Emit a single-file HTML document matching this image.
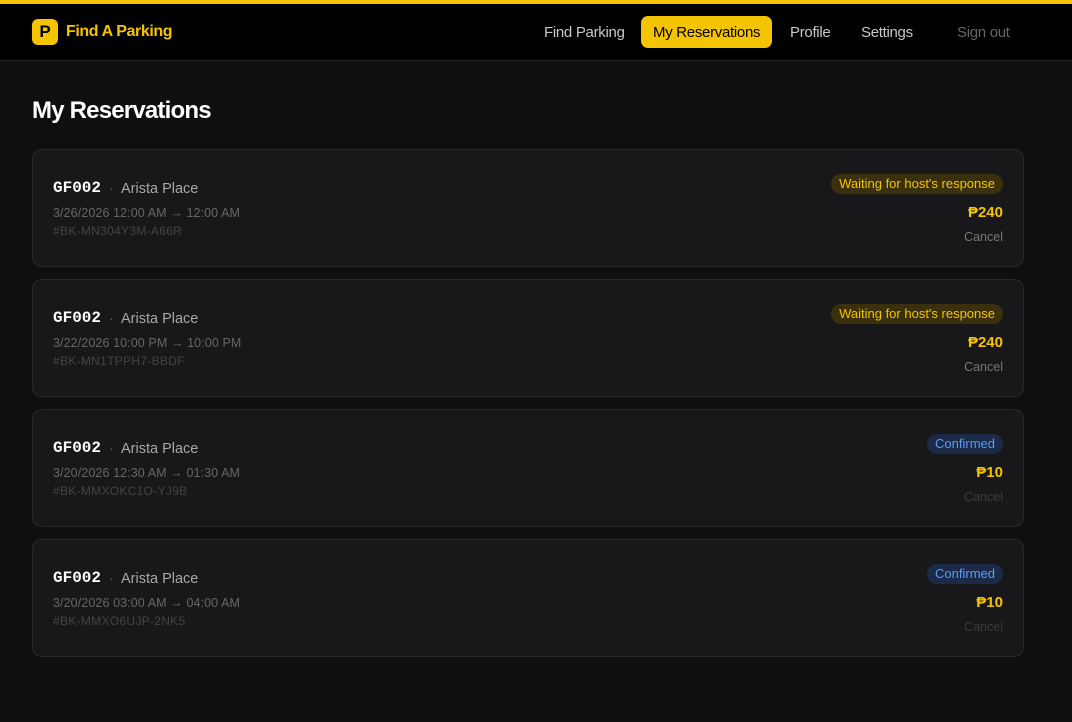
<!DOCTYPE html>
<html><head><meta charset="utf-8"><style>
*{margin:0;padding:0;box-sizing:border-box}
body{width:1072px;height:722px;background:#0f0f10;font-family:"Liberation Sans",sans-serif;color:#fff;overflow:hidden}
.hdr{height:61px;background:#000;border-top:4px solid #f5c400;border-bottom:1px solid #222;position:relative}
.logo{position:absolute;left:32px;top:15px;width:26px;height:26px;background:#f5c400;border-radius:6px;color:#000;font-weight:bold;font-size:17px;text-align:center;line-height:26px}
.brand{position:absolute;left:66px;top:19px;color:#f5c400;font-weight:bold;font-size:16px;letter-spacing:-0.4px}
.nav a{position:absolute;top:12px;height:32px;line-height:34px;font-size:15px;color:#c8c8c8;letter-spacing:-0.3px}
.nav .act{background:#f5c400;color:#000;border-radius:7px;padding:0 12px}
h1{position:absolute;left:32px;top:97px;font-size:24px;letter-spacing:-0.8px}
.card{position:absolute;left:32px;width:992px;height:118px;background:#18181a;border:1px solid #29292c;border-radius:10px}
.code{position:absolute;left:20px;top:29px;font-family:"Liberation Mono",monospace;font-weight:bold;font-size:16px;color:#fff}
.dot{position:absolute;left:76px;top:30px;color:#555;font-size:14px}
.place{position:absolute;left:88px;top:31px;font-size:14.5px;color:#a8a8a8}
.date{position:absolute;left:20px;top:56px;font-size:12.5px;color:#666;letter-spacing:0.1px}
.id{position:absolute;left:20px;top:74px;font-size:12px;color:#444;letter-spacing:0.3px}
.badge{position:absolute;right:20px;top:24px;height:20px;line-height:20px;padding:0 8px;border-radius:10px;font-size:13px}
.w{background:#3a300c;color:#f5c400}.c{background:#1b2a48;color:#5b9bf0}
.price{position:absolute;right:20px;top:54px;font-weight:bold;font-size:15px;color:#f5c400}
.cancel{position:absolute;right:20px;top:80px;font-size:12.5px;color:#777}
.cancel.d{color:#3c3c3e}
</style></head><body>
<div class="hdr"><div class="logo">P</div><div class="brand">Find A Parking</div>
<div class="nav"><a style="left:544px">Find Parking</a><a class="act" style="left:641px">My Reservations</a><a style="left:790px">Profile</a><a style="left:861px">Settings</a><a style="left:957px;color:#666">Sign out</a></div></div>
<h1>My Reservations</h1>
<div class="card" style="top:149px"><div class="code">GF002</div><div class="dot">·</div><div class="place">Arista Place</div><div class="date">3/26/2026 12:00 AM → 12:00 AM</div><div class="id">#BK-MN304Y3M-A66R</div><div class="badge w">Waiting for host's response</div><div class="price">₱240</div><div class="cancel">Cancel</div></div>
<div class="card" style="top:279px"><div class="code">GF002</div><div class="dot">·</div><div class="place">Arista Place</div><div class="date">3/22/2026 10:00 PM → 10:00 PM</div><div class="id">#BK-MN1TPPH7-BBDF</div><div class="badge w">Waiting for host's response</div><div class="price">₱240</div><div class="cancel">Cancel</div></div>
<div class="card" style="top:409px"><div class="code">GF002</div><div class="dot">·</div><div class="place">Arista Place</div><div class="date">3/20/2026 12:30 AM → 01:30 AM</div><div class="id">#BK-MMXOKC1O-YJ9B</div><div class="badge c">Confirmed</div><div class="price">₱10</div><div class="cancel d">Cancel</div></div>
<div class="card" style="top:539px"><div class="code">GF002</div><div class="dot">·</div><div class="place">Arista Place</div><div class="date">3/20/2026 03:00 AM → 04:00 AM</div><div class="id">#BK-MMXO6UJP-2NK5</div><div class="badge c">Confirmed</div><div class="price">₱10</div><div class="cancel d">Cancel</div></div>
</body></html>
